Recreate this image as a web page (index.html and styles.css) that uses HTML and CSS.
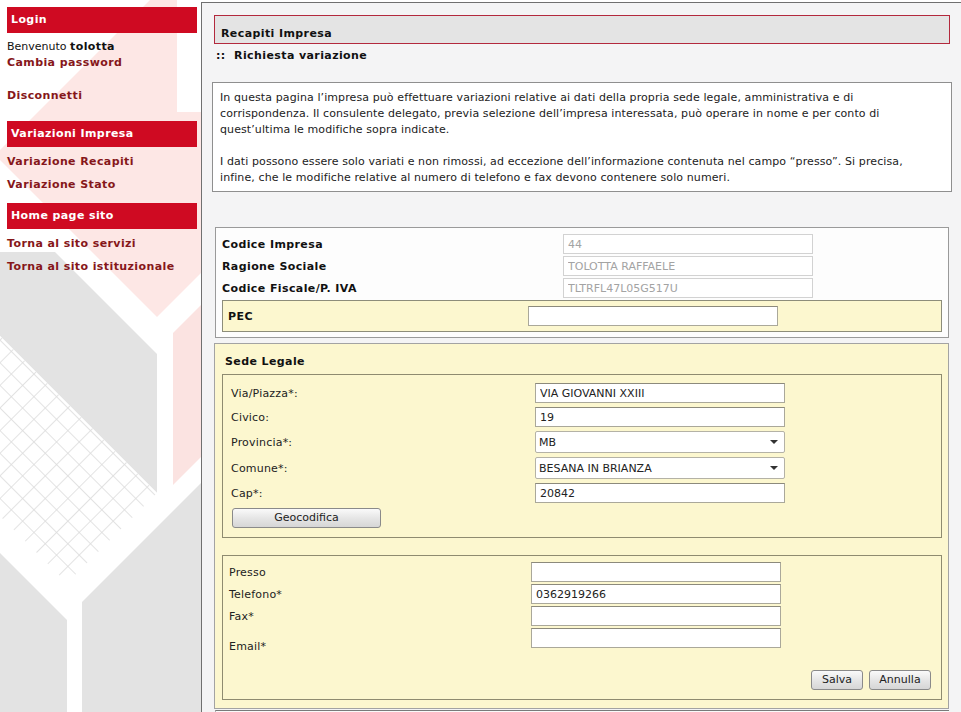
FILE: index.html
```html
<!DOCTYPE html>
<html lang="it">
<head>
<meta charset="utf-8">
<title>Recapiti Impresa</title>
<link rel="stylesheet" href="styles.css">
</head>
<body>
<aside class="sidebar">
  <svg class="side-bg" width="201" height="712" viewBox="0 0 201 712" aria-hidden="true">
    <defs>
      <pattern id="grid" width="16" height="16" patternUnits="userSpaceOnUse" patternTransform="rotate(45)">
        <path d="M0 0.5H16M0.5 0V16" stroke="#dcdcdc" stroke-width="0.8" fill="none"/>
      </pattern>
    </defs>
    <rect width="201" height="712" fill="#ffffff"/>
    <polygon fill="#fde7e5" points="0,160 157,317 201,273 201,112 177,112 177,0 150,0 0,150"/>
    <polygon fill="#fbe3e1" points="173,333 201,305 201,457 173,485"/>
    <polygon fill="#e3e3e3" points="0,252 55,252 157,354 157,493 0,336"/>
    <polygon fill="#ffffff" points="0,336 157,493 67,583 0,516"/>
    <polygon fill="url(#grid)" points="0,336 157,493 67,583 0,516"/>
    <polygon fill="#e3e3e3" points="0,553 67,620 67,712 0,712"/>
    <polygon fill="#e3e3e3" points="82,602 201,483 201,712 82,712"/>
  </svg>
  <div class="side-content">
    <div class="side-head">Login</div>
    <div class="side-text">
      <div>Benvenuto <b>tolotta</b></div>
      <a class="side-link" href="#">Cambia password</a>
      <div class="blank">&nbsp;</div>
      <a class="side-link" href="#">Disconnetti</a>
    </div>
    <div class="side-head head-gap">Variazioni Impresa</div>
    <nav class="side-links">
      <a class="side-link" href="#">Variazione Recapiti</a>
      <a class="side-link" href="#">Variazione Stato</a>
    </nav>
    <div class="side-head head-gap2">Home page sito</div>
    <nav class="side-links">
      <a class="side-link" href="#">Torna al sito servizi</a>
      <a class="side-link" href="#">Torna al sito istituzionale</a>
    </nav>
  </div>
</aside>

<main class="frame">
  <div class="title-box">Recapiti Impresa</div>
  <div class="subtitle">::&nbsp; Richiesta variazione</div>
  <div class="info-box">
    <p>In questa pagina l’impresa può effettuare variazioni relative ai dati della propria sede legale, amministrativa e di<br>corrispondenza. Il consulente delegato, previa selezione dell’impresa interessata, può operare in nome e per conto di<br>quest’ultima le modifiche sopra indicate.</p>
    <p>I dati possono essere solo variati e non rimossi, ad eccezione dell’informazione contenuta nel campo “presso”. Si precisa,<br>infine, che le modifiche relative al numero di telefono e fax devono contenere solo numeri.</p>
  </div>

  <div class="id-box">
    <div class="id-grid">
      <label class="id-label">Codice Impresa</label>
      <input class="ro" type="text" value="44" disabled>
      <label class="id-label">Ragione Sociale</label>
      <input class="ro" type="text" value="TOLOTTA RAFFAELE" disabled>
      <label class="id-label">Codice Fiscale/P. IVA</label>
      <input class="ro" type="text" value="TLTRFL47L05G517U" disabled>
    </div>
    <div class="pec-box">
      <label class="id-label">PEC</label>
      <input class="field" type="text" value="">
    </div>
  </div>

  <section class="sede">
    <div class="sede-title">Sede Legale</div>
    <div class="fs fs-addr">
      <div class="addr-grid">
        <label>Via/Piazza*:</label>
        <input class="field" type="text" value="VIA GIOVANNI XXIII">
        <label>Civico:</label>
        <input class="field" type="text" value="19">
        <label>Provincia*:</label>
        <span class="sel-wrap"><select class="sel"><option>MB</option></select></span>
        <label>Comune*:</label>
        <span class="sel-wrap"><select class="sel"><option>BESANA IN BRIANZA</option></select></span>
        <label>Cap*:</label>
        <input class="field" type="text" value="20842">
      </div>
      <button class="btn btn-geo" type="button">Geocodifica</button>
    </div>

    <div class="fs fs-contact">
      <div class="contact-grid">
        <label>Presso</label>
        <input class="field" type="text" value="">
        <label>Telefono*</label>
        <input class="field" type="text" value="0362919266">
        <label>Fax*</label>
        <input class="field" type="text" value="">
        <label class="email-label">Email*</label>
        <input class="field" type="text" value="">
      </div>
      <div class="actions">
        <button class="btn btn-salva" type="button">Salva</button>
        <button class="btn btn-annulla" type="button">Annulla</button>
      </div>
    </div>
  </section>
  <div class="next-box"></div>
</main>
</body>
</html>
```

FILE: styles.css
```css
* { box-sizing: border-box; }

html, body {
  margin: 0;
  height: 100%;
  overflow: hidden;
}

body {
  display: flex;
  font-family: "DejaVu Sans", Verdana, sans-serif;
  font-size: 11px;
  color: #222;
  background: #fff;
}

b { letter-spacing: 0.4px; }

/* ---------- sidebar ---------- */
.sidebar {
  position: relative;
  width: 201px;
  flex: none;
  height: 712px;
}

.side-bg {
  position: absolute;
  left: 0;
  top: 0;
}

.side-content {
  position: relative;
  padding-top: 7px;
}

.side-head {
  margin-left: 7px;
  width: 190px;
  height: 26px;
  line-height: 26px;
  padding-left: 4px;
  background: #cf0a22;
  color: #fff;
  font-weight: bold;
  letter-spacing: 0.4px;
}

.head-gap { margin-top: 17px; }
.head-gap2 { margin-top: 10px; }

.side-text {
  margin-top: 6px;
  padding-left: 7px;
  line-height: 16px;
  color: #111;
}

.side-text b { color: #111; }

.side-text .blank { height: 17px; }

.side-link {
  display: block;
  color: #86171a;
  font-weight: bold;
  letter-spacing: 0.4px;
  text-decoration: none;
  line-height: 16px;
}

.side-links {
  margin-top: 7px;
  padding-left: 7px;
  display: flex;
  flex-direction: column;
  gap: 7px;
}

/* ---------- main frame ---------- */
.frame {
  flex: 1;
  min-width: 0;
  margin-top: 2px;
  height: calc(100% - 2px);
  border-top: 1px solid #707070;
  border-left: 1px solid #707070;
  background: #f4f4f5;
}

.title-box {
  margin: 12px 0 0 12px;
  width: 736px;
  height: 29px;
  padding: 11px 0 0 6px;
  line-height: 14px;
  border: 1px solid #b3293d;
  background: #e4e4e4;
  font-weight: bold;
  letter-spacing: 0.4px;
  color: #111;
}

.subtitle {
  margin: 5px 0 0 14px;
  line-height: 14px;
  font-weight: bold;
  letter-spacing: 0.4px;
  color: #111;
}

.info-box {
  margin: 19px 0 0 10px;
  width: 740px;
  padding: 7px 7px 5px;
  border: 1px solid #8f8f8f;
  background: #fff;
  line-height: 16px;
  letter-spacing: 0.1px;
  color: #222;
}

.info-box p {
  margin: 0;
  white-space: nowrap;
}

.info-box p + p { margin-top: 16px; }

/* ---------- identification box ---------- */
.id-box {
  margin: 35px 0 0 13px;
  width: 734px;
  padding: 6px 6px 5px 6px;
  border: 1px solid #9a9a9a;
  background: #fdfdfd;
}

.id-grid {
  display: grid;
  grid-template-columns: 341px 250px;
  row-gap: 2px;
  align-items: center;
}

.id-label {
  font-weight: bold;
  letter-spacing: 0.4px;
  color: #111;
}

.ro {
  height: 20px;
  width: 250px;
  padding: 0 4px;
  border: 1px solid #d2d2d2;
  background: #fff;
  color: #a3a3a3;
  font: 11px "DejaVu Sans", Verdana, sans-serif;
}

.pec-box {
  margin-top: 2px;
  width: 720px;
  padding: 5px 5px;
  border: 1px solid #8d8d7a;
  background: #fcf7cf;
  display: grid;
  grid-template-columns: 300px 250px;
  align-items: center;
}

.field {
  height: 20px;
  width: 250px;
  padding: 0 4px;
  border: 1px solid #aaa89a;
  border-top-color: #8c8a7c;
  background: #fff;
  color: #222;
  font: 11px "DejaVu Sans", Verdana, sans-serif;
}

/* ---------- sede legale ---------- */
.sede {
  margin: 5px 0 0 12px;
  width: 735px;
  padding: 11px 6px 8px 7px;
  border: 1px solid #a3a3a3;
  background: #fcf7cf;
}

.sede-title {
  padding-left: 3px;
  line-height: 14px;
  font-weight: bold;
  letter-spacing: 0.4px;
  color: #111;
}

.fs {
  width: 720px;
  border: 1px solid #8e8b70;
  background: #fcf7cf;
}

.fs-addr {
  margin-top: 5px;
  padding: 8px 0 9px 8px;
}

.addr-grid {
  display: grid;
  grid-template-columns: 304px 250px;
  grid-template-rows: 20px 20px 22px 22px 20px;
  row-gap: 4px;
  align-items: center;
}

.addr-grid label,
.contact-grid label {
  color: #222;
  letter-spacing: 0.2px;
}

.sel-wrap {
  position: relative;
  display: block;
  width: 250px;
  height: 22px;
}

.sel {
  appearance: none;
  -webkit-appearance: none;
  width: 250px;
  height: 22px;
  padding: 0 3px;
  border: 1px solid #b4b2a6;
  border-radius: 2px;
  background: #fff;
  color: #222;
  font: 11px "DejaVu Sans", Verdana, sans-serif;
}

.sel-wrap::after {
  content: "";
  position: absolute;
  right: 7px;
  top: 9px;
  border-left: 4px solid transparent;
  border-right: 4px solid transparent;
  border-top: 4px solid #333;
  pointer-events: none;
}

.btn {
  height: 20px;
  padding: 0;
  border: 1px solid #8a8a8a;
  border-radius: 3px;
  background: linear-gradient(#fafafa, #e6e6e6 50%, #d6d6d6);
  color: #222;
  font: 11px "DejaVu Sans", Verdana, sans-serif;
  line-height: 18px;
  text-align: center;
}

.btn-geo {
  display: block;
  margin: 5px 0 0 1px;
  width: 149px;
}

.fs-contact {
  margin-top: 17px;
  padding: 6px 0 9px 6px;
}

.contact-grid {
  display: grid;
  grid-template-columns: 302px 250px;
  row-gap: 2px;
  align-items: center;
}

.contact-grid .email-label {
  align-self: start;
  padding-top: 12px;
  line-height: 14px;
}

.contact-grid .field:last-child { align-self: start; }

.actions {
  margin-top: 16px;
  padding-right: 10px;
  display: flex;
  justify-content: flex-end;
  gap: 6px;
}

.btn-salva { width: 52px; }
.btn-annulla { width: 62px; }

.next-box {
  margin: 1px 0 0 13px;
  width: 734px;
  height: 20px;
  border-top: 1px solid #7a7a7a;
  border-left: 1px solid #b0b0b0;
  background: #fafafa;
}
```
